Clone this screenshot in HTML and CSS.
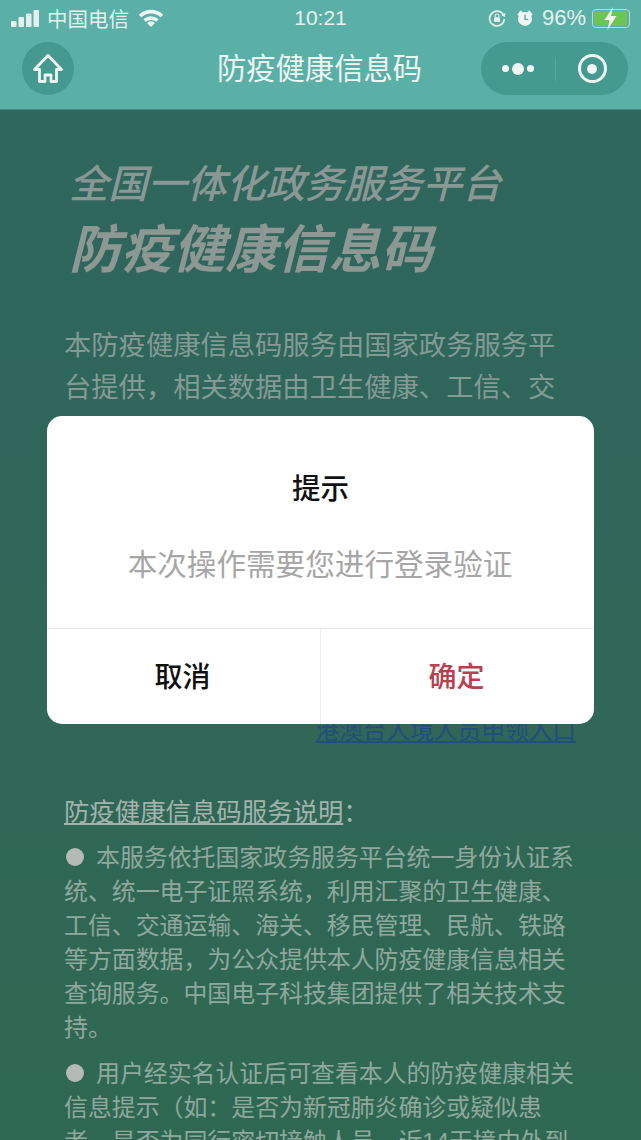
FILE: index.html
```html
<!DOCTYPE html>
<html lang="zh-CN">
<head>
    <meta charset="UTF-8">
    <meta name="viewport" content="width=device-width, initial-scale=1.0">
    <title>防疫健康信息码</title>
    <link rel="stylesheet" href="styles.css">
</head>
<body>

    <header class="top-bar">
        <div class="status-bar">
            <div class="status-left">
                <svg class="signal" width="28" height="17" viewBox="0 0 28 17">
                    <rect x="0" y="11" width="5.500" height="6" rx="1" />
                    <rect x="7.500" y="7" width="5.500" height="10" rx="1" />
                    <rect x="15" y="3.500" width="5.500" height="13.500" rx="1" />
                    <rect x="22.500" y="0" width="5.500" height="17" rx="1" />
                </svg>
                <span class="carrier">中国电信</span>
                <svg class="wifi" width="26" height="18" viewBox="0 0 26 18">
                    <path d="M2 7a16 16 0 0 1 22 0" />
                    <path d="M6.500 11.500a10 10 0 0 1 13 0" />
                    <path d="M13 18l-4-4a5.500 5.500 0 0 1 8 0z" class="wifi-dot" />
                </svg>
            </div>
            <div class="status-time">10:21</div>
            <div class="status-right">
                <svg width="18" height="18" viewBox="0 0 18 18" class="lock-icon">
                    <path d="M15.500 6A7.400 7.400 0 1 0 16.400 10" />
                    <path d="M17.500 3.800l-.6 4.200-3.600-1.800z" class="solid" />
                    <rect x="6" y="8.200" width="6" height="4.800" rx="1" class="solid" />
                    <path d="M7.200 8.200V6.800a1.800 1.800 0 0 1 3.600 0V8.200" class="thin" />
                </svg>
                <svg width="18" height="18" viewBox="0 0 20 20" class="alarm-icon">
                    <circle cx="10" cy="11" r="7.800" />
                    <path d="M1.500 6l3.600-4.500 2.500 2L3.600 8zM18.500 6l-3.600-4.500-2.500 2 4 4.500z" />
                    <path d="M10 6.500V11.500h3.600" class="hand" />
                </svg>
                <span class="battery-text">96%</span>
                <div class="battery">
                    <div class="battery-level"></div>
                    <svg class="bolt" width="15" height="23" viewBox="0 0 15 23">
                        <path d="M10 0L1.500 13h5L4.500 23l9-14H8z" />
                    </svg>
                </div>
            </div>
        </div>
        <nav class="nav-bar">
            <div class="home-btn">
                <svg width="30" height="30" viewBox="0 0 30 30">
                    <path d="M15 1.500L1.500 15.500H6.500V27.500H12V21H18V27.500H23.500V15.500H28.500z" />
                </svg>
            </div>
            <div class="nav-title">防疫健康信息码</div>
            <div class="capsule">
                <div class="capsule-more">
                    <span class="dot"></span>
                    <span class="dot dot-big"></span>
                    <span class="dot"></span>
                </div>
                <div class="capsule-close">
                    <span class="ring"><span class="ring-dot"></span></span>
                </div>
            </div>
        </nav>
    </header>

    <main class="page">
        <h1 class="title-small">全国一体化政务服务平台</h1>
        <h1 class="title-big">防疫健康信息码</h1>

        <p class="intro">本防疫健康信息码服务由国家政务服务平台提供，相关数据由卫生健康、工信、交</p>

        <div class="link-row">
            <a class="entry-link" href="#">港澳台人境人员申领入口</a>
        </div>

        <h2 class="notes-title"><u>防疫健康信息码服务说明</u>：</h2>
        <p class="note"><span class="bullet"></span>本服务依托国家政务服务平台统一身份认证系统、统一电子证照系统，利用汇聚的卫生健康、工信、交通运输、海关、移民管理、民航、铁路等方面数据，为公众提供本人防疫健康信息相关查询服务。中国电子科技集团提供了相关技术支持。</p>
        <p class="note"><span class="bullet"></span>用户经实名认证后可查看本人的防疫健康相关信息提示（如：是否为新冠肺炎确诊或疑似患者，是否为同行密切接触人员，近14天境内外到</p>
    </main>

    <!-- login dialog -->
    <div class="modal">
        <div class="modal-body">
            <div class="modal-title">提示</div>
            <div class="modal-text">本次操作需要您进行登录验证</div>
        </div>
        <div class="modal-actions">
            <div class="modal-btn">取消</div>
            <div class="modal-btn modal-btn-ok">确定</div>
        </div>
    </div>

</body>
</html>
```

FILE: styles.css
```css
html, body {
    margin: 0;
    height: 1140px;
    overflow: hidden;
}

body {
    position: relative;
    font-family: "Liberation Sans", "Noto Sans CJK SC", sans-serif;
    background: linear-gradient(180deg, #2e675d 0%, #30665a 40%, #2f6852 100%);
}

/* Header */
.top-bar {
    height: 109px;
    background-color: #5ab0a6;
    border-bottom: 1px solid #44897f;
    color: #e6f0ee;
}

.status-bar {
    height: 36px;
    padding: 0 11px;
    display: grid;
    grid-template-columns: 1fr auto 1fr;
    align-items: center;
    font-size: 20.5px;
}

.status-left {
    display: flex;
    align-items: center;
}

.signal {
    fill: #e6f0ee;
}

.carrier {
    margin-left: 8px;
}

.wifi {
    margin-left: 9px;
    fill: none;
    stroke: #eef5f3;
    stroke-width: 3.6;
}

.wifi-dot {
    fill: #eef5f3;
    stroke: none;
}

.status-time {
    font-size: 21px;
}

.status-right {
    display: flex;
    align-items: center;
    justify-content: flex-end;
}

.lock-icon {
    fill: none;
    stroke: #e6f0ee;
    stroke-width: 1.7;
}

.lock-icon .solid {
    fill: #e6f0ee;
    stroke: none;
}

.lock-icon .thin {
    stroke-width: 1.2;
}

.alarm-icon {
    margin-left: 10px;
    fill: #eef5f3;
}

.alarm-icon .hand {
    fill: none;
    stroke: #5ab0a6;
    stroke-width: 1.6;
}

.battery-text {
    margin-left: 8px;
    font-size: 22px;
}

.battery {
    position: relative;
    width: 38px;
    height: 19px;
    margin-left: 6px;
    border: 1px solid #b9dcd3;
    border-radius: 4px;
    padding: 1px 2px 1px 1px;
    box-sizing: border-box;
}

.battery-level {
    height: 100%;
    background-color: #6dc556;
    border-radius: 2px;
}

.bolt {
    position: absolute;
    left: 10px;
    top: -3px;
    fill: #f2f6ef;
}

.nav-bar {
    height: 53px;
    margin-top: 6px;
    padding: 0 13px;
    display: grid;
    grid-template-columns: 1fr auto 1fr;
    align-items: center;
}

.home-btn {
    width: 52px;
    height: 53px;
    margin-left: 9px;
    border-radius: 50%;
    background-color: #459a8f;
    display: flex;
    align-items: center;
    justify-content: center;
}

.home-btn svg {
    fill: none;
    stroke: #f0f6f5;
    stroke-width: 2.8;
    stroke-linejoin: round;
}

.nav-title {
    font-size: 29.3px;
    color: #eef5f3;
    margin: 0 0 6px -2px;
}

.capsule {
    justify-self: end;
    width: 147px;
    height: 53px;
    border-radius: 27px;
    background-color: #459a8f;
    display: flex;
    align-items: center;
}

.capsule-more {
    width: 74px;
    height: 24px;
    border-right: 1px solid #55a89c;
    display: flex;
    align-items: center;
    justify-content: center;
    gap: 3px;
}

.dot {
    width: 7px;
    height: 7px;
    border-radius: 50%;
    background-color: #f0f6f5;
}

.dot-big {
    width: 12px;
    height: 12px;
}

.capsule-close {
    flex: 1;
    display: flex;
    justify-content: center;
}

.ring {
    width: 29px;
    height: 29px;
    box-sizing: border-box;
    border-radius: 50%;
    border: 3.500px solid #f0f6f5;
    display: flex;
    align-items: center;
    justify-content: center;
}

.ring-dot {
    width: 10px;
    height: 10px;
    border-radius: 50%;
    background-color: #f0f6f5;
}

/* Page content */
.page {
    padding: 0 65px;
    box-sizing: border-box;
}

.title-small {
    margin: 50px 0 0 4px;
    font-size: 39.3px;
    line-height: 48px;
    font-weight: 500;
    font-style: italic;
    color: #8a9895;
}

.title-big {
    margin: 6px 0 0 4px;
    font-size: 52px;
    line-height: 72px;
    font-weight: 700;
    font-style: italic;
    color: #8d9794;
}

.intro {
    margin: 39px 0 0 -1px;
    font-size: 27.3px;
    line-height: 42px;
    height: 84px;
    overflow: hidden;
    color: #849a95;
}

.link-row {
    margin-top: 305px;
    line-height: 34px;
    text-align: right;
}

.entry-link {
    font-size: 23.7px;
    color: #1f4f7d;
}

.notes-title {
    margin: 44px 0 0 -1px;
    font-size: 25.4px;
    line-height: 34px;
    font-weight: 400;
    color: #a3b3ac;
}

.note {
    margin: 12px 0 0 -1px;
    font-size: 23.9px;
    line-height: 34px;
    color: #8fa89e;
}

.bullet {
    display: inline-block;
    width: 18px;
    height: 18px;
    margin: 0 12px 0 2px;
    border-radius: 50%;
    background-color: #b4bab6;
}

/* Dialog */
.modal {
    position: absolute;
    top: 416px;
    left: 47px;
    right: 47px;
    height: 308px;
    background-color: #fff;
    border-radius: 15px;
    display: flex;
    flex-direction: column;
    text-align: center;
}

.modal-body {
    height: 212px;
    border-bottom: 1px solid #e6e6e6;
}

.modal-title {
    margin-top: 54px;
    font-size: 28.5px;
    line-height: 38px;
    font-weight: 500;
    color: #111;
}

.modal-text {
    margin-top: 37px;
    padding-right: 1px;
    font-size: 29.6px;
    line-height: 40px;
    color: #a6a6a6;
}

.modal-actions {
    flex: 1;
    display: flex;
}

.modal-btn {
    flex: 1;
    padding: 0 2px 4px 0;
    display: flex;
    align-items: center;
    justify-content: center;
    font-size: 28px;
    font-weight: 500;
    color: #111;
}

.modal-btn-ok {
    border-left: 1px solid #ececec;
    color: #b8404f;
}
```
